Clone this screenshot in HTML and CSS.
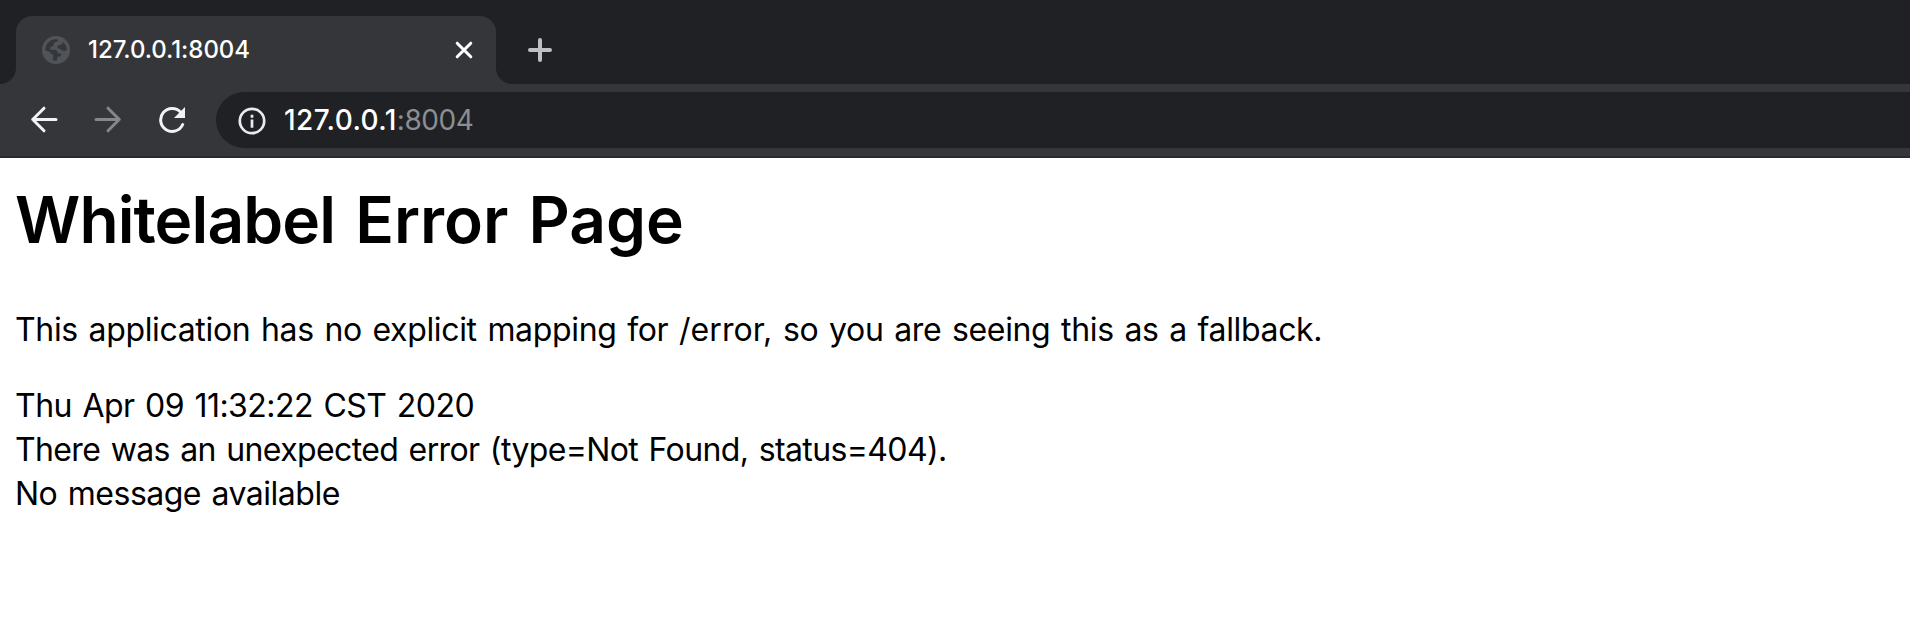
FILE: index.html
```html
<!DOCTYPE html>
<html lang="en">
<head>
<meta charset="utf-8">
<title>127.0.0.1:8004</title>
<link rel="stylesheet" href="styles.css">
</head>
<body>
<header class="browser">
  <div class="tab-strip">
    <div class="tab">
      <svg class="globe" width="28" height="28" viewBox="0 0 28 28"><circle cx="14" cy="14" r="14" fill="#505357"/><path d="M3.2 14C3.4 8.3 7.4 3.9 13 3.3C14.6 3 16 3.4 16 4.3C15.9 5.4 14.6 5.9 13.2 6.2C11.9 6.5 11.5 7.3 11.6 8.6C11.6 10 10.5 10.5 9.3 10.7C8 11 8 12.2 8.3 13.7H12.4C14.7 14 15.6 15.4 15.8 17.4H19C19.7 19.4 18.5 20.5 16 20.6C15.3 20.8 15 21.5 15 24.6H10.8V21.2C12 20.6 12 19 10.6 18.3C9 18 8.2 17 7.6 15.5C6 15.5 4.5 15 3.2 14ZM20.8 6C23.8 8 25 11 24.8 14.2C22.8 15.6 20.4 15 19.2 13.6C18.4 12.6 16.4 12.8 15.5 11.5C14.8 9.8 16 8.9 18 8.9C20 8.8 20.6 7.5 20.8 6Z" fill="#35363a"/></svg>
      <span class="tab-title">127.0.0.1:8004</span>
      <svg class="close" width="18" height="18" viewBox="0 0 18 18"><path d="M2.2 2.2L15.8 15.8M15.8 2.2L2.2 15.8"/></svg>
    </div>
    <svg class="new-tab" width="24" height="24" viewBox="0 0 24 24"><path d="M12 2V22M2 12H22"/></svg>
  </div>
  <nav class="toolbar">
    <svg class="nav-icon back" width="28" height="28" viewBox="0 0 28 28"><path d="M26 13.5H3M14 2.2L2.7 13.5L14 24.8"/></svg>
    <svg class="nav-icon forward" width="28" height="28" viewBox="0 0 28 28"><path d="M2 13.5H25M14 2.2L25.3 13.5L14 24.8"/></svg>
    <svg class="nav-icon reload" width="28" height="28" viewBox="0 0 28 28"><path d="M22.7 6.2A11.5 11.5 0 1 0 24.7 18.5"/><path class="arrow" d="M27 1V12H16Z"/></svg>
    <div class="address">
      <svg class="info" width="28" height="28" viewBox="0 0 28 28"><circle cx="14" cy="14" r="12.2"/><path d="M14 12.6V20.8M14 7.7V10.7"/></svg>
      <span class="url"><span class="host">127.0.0.1</span><span class="port">:8004</span></span>
    </div>
  </nav>
</header>
<main class="page">
  <h1><span class="lead">Whitelabel</span> Error Page</h1>
  <p>This application has no explicit mapping for <span class="path">/error,</span> so you are seeing this as a fallback.</p>
  <div class="date">Thu Apr 09 11:32:22 CST 2020</div>
  <div class="detail">There was an unexpected error (type=Not Found, status=404).</div>
  <div class="message">No message available</div>
</main>
</body>
</html>
```

FILE: styles.css
```css
body {
  margin: 0;
  background: #fff;
  color: #000;
  font-family: Inter, "Liberation Sans", sans-serif;
  overflow: hidden;
}
svg { display: block; flex: none; }
.browser { background: #202124; }
.tab-strip {
  display: flex;
  height: 68px;
  padding: 16px 0 0 16px;
  align-items: center;
}
.tab {
  position: relative;
  display: flex;
  align-items: center;
  box-sizing: border-box;
  width: 480px;
  height: 68px;
  padding: 0 23px 0 26px;
  border-radius: 16px 16px 0 0;
  background: #35363a;
}
.tab::before, .tab::after {
  content: "";
  position: absolute;
  bottom: 0;
  width: 16px;
  height: 16px;
}
.tab::before { left: -16px; background: radial-gradient(circle at 0 0, transparent 15.5px, #35363a 16.5px); }
.tab::after { right: -16px; background: radial-gradient(circle at 100% 0, transparent 15.5px, #35363a 16.5px); }
.tab-title {
  flex: 1;
  margin-left: 18px;
  color: #fff;
  font-size: 24px;
  font-weight: 500;
  letter-spacing: -0.05px;
  line-height: 32px;
  white-space: nowrap;
}
.close { fill: none; stroke: #fff; stroke-width: 3; stroke-linecap: round; }
.new-tab { margin-left: 32px; fill: none; stroke: #bdc1c6; stroke-width: 4; stroke-linecap: round; }
.toolbar {
  display: flex;
  align-items: center;
  height: 72px;
  padding-left: 30px;
  background: #35363a;
  border-bottom: 2px solid #28292c;
}
.nav-icon { fill: none; stroke: #f1f3f4; stroke-width: 3; stroke-linecap: round; stroke-linejoin: round; }
.forward { margin-left: 36px; stroke: #86878a; }
.reload { margin-left: 36px; }
.reload .arrow { fill: #f1f3f4; stroke: none; }
.address {
  display: flex;
  align-items: center;
  flex: 1;
  height: 56px;
  margin-left: 30px;
  padding-left: 22px;
  border-radius: 28px 0 0 28px;
  background: #202124;
}
.info { margin-top: 1px; fill: none; stroke: #e8eaed; stroke-width: 2.7; }
.url { margin-left: 18px; color: #fff; font-size: 28px; line-height: 36px; white-space: nowrap; }
.host { font-weight: 500; letter-spacing: 0.4px; }
.port { color: #8c8e91; letter-spacing: -0.4px; }
.page { padding: 0 15px; font-size: 32px; line-height: 44px; white-space: nowrap; word-spacing: 2px; }
h1 { margin: 17px 0 43px; font-size: 64px; line-height: 90px; font-weight: 600; word-spacing: 4px; }
.lead { letter-spacing: -0.9px; }
p { margin: 0 0 32px; letter-spacing: -0.34px; }
.path { letter-spacing: 0.1px; }
.date { letter-spacing: -0.53px; }
.detail { letter-spacing: -0.62px; }
.message { letter-spacing: -0.5px; }
```
